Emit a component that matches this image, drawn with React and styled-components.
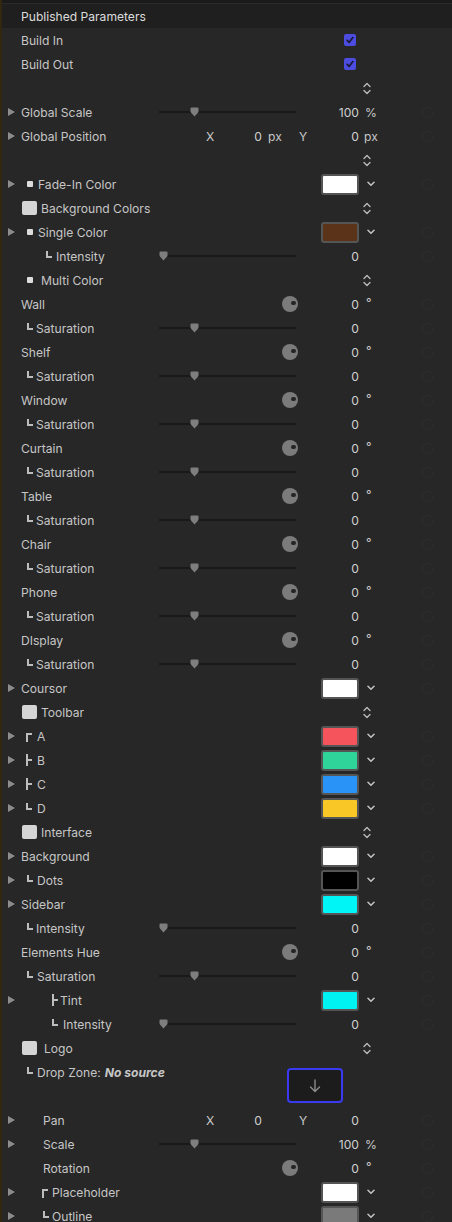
import React from "react";
import styled, { createGlobalStyle } from "styled-components";

const GlobalStyle = createGlobalStyle`
  html, body { margin: 0; padding: 0; background: #272727; }
  body {
    font-family: Inter, "Noto Sans", "Liberation Sans", sans-serif;
    -webkit-font-smoothing: antialiased;
  }
`;

const Panel = styled.div`
  width: 452px;
  height: 1222px;
  overflow: hidden;
  box-sizing: border-box;
  border-left: 2px solid #33280f;
  background: #272727;
  color: #c6c6c6;
  font-size: 12.1px;
`;

const TopEdge = styled.div`
  height: 4px;
  box-sizing: border-box;
  background: #1a1a1a;
  border-bottom: 1px solid #2b2b2b;
`;

const Header = styled.div`
  height: 24px;
  display: flex;
  align-items: center;
  padding-left: 19px;
  background: #1f1f1f;
  color: #dcdcdc;
`;

const Row = styled.div`
  display: grid;
  grid-template-columns: 19px 139px 140px 60px 25px 1fr;
  align-items: ${(p) => (p.$top ? "start" : "center")};
  height: ${(p) => p.$h || 24}px;
`;

const Tri = styled.span`
  grid-column: 1;
  width: 0;
  height: 0;
  margin-left: 6px;
  border-left: 7px solid #8c8c8c;
  border-top: 4.5px solid transparent;
  border-bottom: 4.5px solid transparent;
`;

const Label = styled.span`
  grid-column: 2;
  grid-row: 1;
  display: flex;
  align-items: center;
  height: 24px;
  padding-left: ${(p) => p.$indent || 0}px;
  white-space: nowrap;
`;

const Box = styled.span`
  width: 15px;
  height: 14px;
  margin-left: 1px;
  margin-right: ${(p) => p.$gap}px;
  border-radius: 2px;
  background: #d4d4d4;
`;

const Dot = styled.span`
  width: 6px;
  height: 6px;
  margin-left: 6px;
  margin-right: ${(p) => p.$gap}px;
  border-radius: 1px;
  background: #dcdcdc;
`;

const Branch = styled.span`
  position: relative;
  flex: none;
  box-sizing: border-box;
  width: 6px;
  margin-left: ${(p) => p.$ml}px;
  margin-right: ${(p) => p.$mr}px;
  border-left: 2px solid #bdbdbd;
  ${(p) =>
    p.$kind === "end" &&
    `height: 7px; margin-bottom: 4px; border-bottom: 2px solid #bdbdbd;`}
  ${(p) =>
    p.$kind === "start" &&
    `height: 9px; margin-top: 3px; border-top: 2px solid #bdbdbd;`}
  ${(p) =>
    p.$kind === "mid" &&
    `height: 12px;
     &::after {
       content: "";
       position: absolute;
       left: 0;
       top: 5px;
       width: 4px;
       height: 2px;
       background: #bdbdbd;
     }`}
`;

const Bold = styled.span`
  font-weight: 700;
  font-style: italic;
  margin-left: 4px;
`;

const Track = styled.div`
  grid-column: 3;
  position: relative;
  width: 137px;
  height: 2px;
  margin-left: -1px;
  background: #191919;
`;

const ThumbShape = styled.svg`
  position: absolute;
  top: -4px;
  left: ${(p) => p.$pos}px;
`;

const Value = styled.span`
  grid-column: 4;
  justify-self: end;
  margin-right: 1px;
  color: #d0d0d0;
`;

const Unit = styled.span`
  grid-column: 5;
  padding-left: ${(p) => p.$pad || 4}px;
  color: #c8c8c8;
  align-self: ${(p) => (p.$sup ? "start" : "center")};
  margin-top: ${(p) => (p.$sup ? 3 : 0)}px;
`;

const DialBody = styled.span`
  grid-column: 3;
  justify-self: end;
  margin-right: 2px;
  position: relative;
  width: 16px;
  height: 16px;
  border-radius: 50%;
  background: #7b7b7b;
  &::after {
    content: "";
    position: absolute;
    left: 9px;
    top: 4.5px;
    width: 4.5px;
    height: 4.5px;
    border-radius: 50%;
    background: #242424;
  }
`;

const Swatch = styled.span`
  grid-column: 4;
  justify-self: end;
  margin-right: 1px;
  box-sizing: border-box;
  width: 38px;
  height: 21px;
  border: 2px solid #555;
  border-radius: 3px;
  background: ${(p) => p.$color};
`;

const IconCell = styled.svg`
  grid-column: ${(p) => p.$col || 5};
  margin-left: ${(p) => p.$ml}px;
  justify-self: ${(p) => (p.$end ? "end" : "start")};
  margin-right: ${(p) => p.$mr || 0}px;
`;

const Keyframe = styled.span`
  grid-column: 6;
  margin-left: 37px;
  width: 9px;
  height: 9px;
  border-radius: 50%;
  border: 1px solid rgba(255, 255, 255, 0.03);
`;

const Vec = styled.div`
  grid-column: ${(p) => p.$col};
  display: flex;
  align-items: center;
  color: #c8c8c8;
`;

const Axis = styled.span`
  margin-left: ${(p) => p.$ml}px;
`;

const Num = styled.span`
  flex: 1;
  text-align: right;
  color: #d0d0d0;
`;

const VecUnit = styled.span`
  box-sizing: border-box;
  width: ${(p) => p.$w}px;
  padding-left: ${(p) => p.$pad}px;
`;

const DropBox = styled.div`
  grid-column: 3 / 5;
  grid-row: 1;
  justify-self: end;
  margin-top: 8px;
  margin-right: 17px;
  box-sizing: border-box;
  width: 56px;
  height: 35px;
  border: 2px solid #3a3af2;
  border-radius: 4px;
  background: #1c1c1c;
  display: flex;
  align-items: center;
  justify-content: center;
`;

function Thumb({ pos }) {
  return (
    <ThumbShape $pos={pos} width="9" height="10" viewBox="0 0 9 10">
      <path d="M1.5 0.5 H7.5 Q8.5 0.5 8.5 1.5 V5 L4.5 9.5 L0.5 5 V1.5 Q0.5 0.5 1.5 0.5 Z" fill="#7e7e7e" />
    </ThumbShape>
  );
}

function Slider({ pos, value, unit }) {
  return (
    <>
      <Track>
        <Thumb pos={pos} />
      </Track>
      <Value>{value}</Value>
      {unit && <Unit $pad={5}>{unit}</Unit>}
      <Keyframe />
    </>
  );
}

function Dial() {
  return (
    <>
      <DialBody />
      <Value>0</Value>
      <Unit $pad={6} $sup>°</Unit>
      <Keyframe />
    </>
  );
}

function Chevron() {
  return (
    <IconCell $ml={7} width="8" height="6" viewBox="0 0 8 6">
      <path d="M1 1.2 L4 4.2 L7 1.2" fill="none" stroke="#c4c4c4" strokeWidth="1.5" strokeLinecap="round" strokeLinejoin="round" />
    </IconCell>
  );
}

function Stepper() {
  return (
    <IconCell $ml={3} width="8" height="13" viewBox="0 0 8 13">
      <path d="M1 4.5 L4 1.5 L7 4.5 M1 8.5 L4 11.5 L7 8.5" fill="none" stroke="#bdbdbd" strokeWidth="1.3" strokeLinecap="round" strokeLinejoin="round" />
    </IconCell>
  );
}

function Color({ color }) {
  return (
    <>
      <Swatch $color={color} />
      <Chevron />
      <Keyframe />
    </>
  );
}

function Check() {
  return (
    <IconCell $col={4} $end $mr={4} $ml={0} width="12" height="12" viewBox="0 0 12 12">
      <rect width="12" height="12" rx="2" fill="#4c4ce0" />
      <path d="M3.2 6.4 L5.1 8.4 L8.8 3.6" fill="none" stroke="#17173a" strokeWidth="1.7" strokeLinecap="round" strokeLinejoin="round" />
    </IconCell>
  );
}

function XY({ unit }) {
  return (
    <>
      <Vec $col={3}>
        <Axis $ml={46}>X</Axis>
        <Num>0</Num>
        <VecUnit $w={38} $pad={6}>{unit}</VecUnit>
      </Vec>
      <Vec $col="4 / 6">
        <Axis $ml={-1}>Y</Axis>
        <Num>0</Num>
        <VecUnit $w={26} $pad={5}>{unit}</VecUnit>
      </Vec>
      <Keyframe />
    </>
  );
}

function HueGroup({ name }) {
  return (
    <>
      <Row>
        <Label>{name}</Label>
        <Dial />
      </Row>
      <Row>
        <Label>
          <Branch $kind="end" $ml={6} $mr={3} />
          Saturation
        </Label>
        <Slider pos={31} value="0" />
      </Row>
    </>
  );
}

const hues = ["Wall", "Shelf", "Window", "Curtain", "Table", "Chair", "Phone", "DIsplay"];

export default function App() {
  return (
    <Panel>
      <GlobalStyle />
      <TopEdge />
      <Header>Published Parameters</Header>

      <Row>
        <Label>Build In</Label>
        <Check />
      </Row>
      <Row>
        <Label>Build Out</Label>
        <Check />
      </Row>
      <Row>
        <Stepper />
      </Row>
      <Row>
        <Tri />
        <Label>Global Scale</Label>
        <Slider pos={31} value="100" unit="%" />
      </Row>
      <Row>
        <Tri />
        <Label>Global Position</Label>
        <XY unit="px" />
      </Row>
      <Row>
        <Stepper />
      </Row>
      <Row>
        <Tri />
        <Label>
          <Dot $gap={5} />
          Fade-In Color
        </Label>
        <Color color="#ffffff" />
      </Row>
      <Row>
        <Label>
          <Box $gap={4} />
          Background Colors
        </Label>
        <Stepper />
      </Row>
      <Row>
        <Tri />
        <Label>
          <Dot $gap={5} />
          Single Color
        </Label>
        <Color color="#5b3319" />
      </Row>
      <Row>
        <Label>
          <Branch $kind="end" $ml={25} $mr={4} />
          Intensity
        </Label>
        <Slider pos={0} value="0" />
      </Row>
      <Row>
        <Label>
          <Dot $gap={8} />
          Multi Color
        </Label>
        <Stepper />
      </Row>

      {hues.map((h) => (
        <HueGroup key={h} name={h} />
      ))}

      <Row>
        <Tri />
        <Label>Coursor</Label>
        <Color color="#ffffff" />
      </Row>
      <Row>
        <Label>
          <Box $gap={4} />
          Toolbar
        </Label>
        <Stepper />
      </Row>
      <Row>
        <Tri />
        <Label>
          <Branch $kind="start" $ml={5} $mr={5} />A
        </Label>
        <Color color="#f5545c" />
      </Row>
      <Row>
        <Tri />
        <Label>
          <Branch $kind="mid" $ml={5} $mr={5} />B
        </Label>
        <Color color="#2fd49b" />
      </Row>
      <Row>
        <Tri />
        <Label>
          <Branch $kind="mid" $ml={5} $mr={5} />C
        </Label>
        <Color color="#2a93f7" />
      </Row>
      <Row>
        <Tri />
        <Label>
          <Branch $kind="end" $ml={5} $mr={5} />D
        </Label>
        <Color color="#f9c826" />
      </Row>
      <Row>
        <Label>
          <Box $gap={4} />
          Interface
        </Label>
        <Stepper />
      </Row>
      <Row>
        <Tri />
        <Label>Background</Label>
        <Color color="#ffffff" />
      </Row>
      <Row>
        <Tri />
        <Label>
          <Branch $kind="end" $ml={6} $mr={4} />
          Dots
        </Label>
        <Color color="#000000" />
      </Row>
      <Row>
        <Tri />
        <Label>Sidebar</Label>
        <Color color="#00f6f6" />
      </Row>
      <Row>
        <Label>
          <Branch $kind="end" $ml={6} $mr={3} />
          Intensity
        </Label>
        <Slider pos={0} value="0" />
      </Row>
      <Row>
        <Label>Elements Hue</Label>
        <Dial />
      </Row>
      <Row>
        <Label>
          <Branch $kind="end" $ml={6} $mr={4} />
          Saturation
        </Label>
        <Slider pos={31} value="0" />
      </Row>
      <Row>
        <Tri />
        <Label>
          <Branch $kind="mid" $ml={31} $mr={2} />
          Tint
        </Label>
        <Color color="#00f3f3" />
      </Row>
      <Row>
        <Label>
          <Branch $kind="end" $ml={31} $mr={5} />
          Intensity
        </Label>
        <Slider pos={0} value="0" />
      </Row>
      <Row>
        <Label>
          <Box $gap={7} />
          Logo
        </Label>
        <Stepper />
      </Row>
      <Row $h={48} $top>
        <Label>
          <Branch $kind="end" $ml={6} $mr={4} />
          Drop Zone:<Bold>No source</Bold>
        </Label>
        <DropBox>
          <svg width="12" height="14" viewBox="0 0 12 14">
            <path d="M6 1 V12.5 M1.5 8 L6 12.5 L10.5 8" fill="none" stroke="#8c8c8c" strokeWidth="1.4" strokeLinecap="round" strokeLinejoin="round" />
          </svg>
        </DropBox>
      </Row>
      <Row>
        <Tri />
        <Label $indent={22}>Pan</Label>
        <XY unit="" />
      </Row>
      <Row>
        <Tri />
        <Label $indent={22}>Scale</Label>
        <Slider pos={31} value="100" unit="%" />
      </Row>
      <Row>
        <Label $indent={22}>Rotation</Label>
        <Dial />
      </Row>
      <Row>
        <Tri />
        <Label>
          <Branch $kind="start" $ml={21} $mr={4} />
          Placeholder
        </Label>
        <Color color="#ffffff" />
      </Row>
      <Row>
        <Tri />
        <Label>
          <Branch $kind="end" $ml={22} $mr={3} />
          Outline
        </Label>
        <Color color="#7a7a7a" />
      </Row>
    </Panel>
  );
}
